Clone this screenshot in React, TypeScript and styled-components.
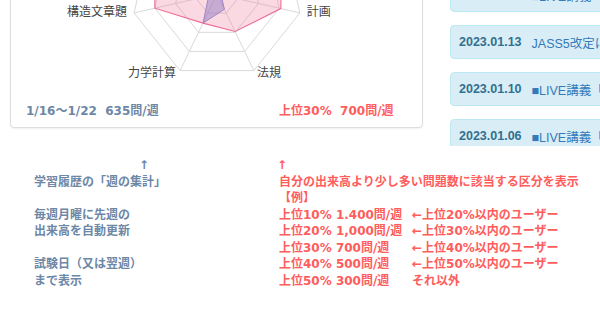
import React from 'react'
import styled, { createGlobalStyle } from 'styled-components'

const Colors = {
  Slate: '#6d87a6',
  Red: '#ff5c5c',
  Label: '#444',
  Grid: '#d9d9d9',
  InfoBg: '#d9edf7',
  InfoBorder: '#bce8f1',
  InfoText: '#31708f',
  Link: '#337ab7'
}

const JP = `'Noto Sans CJK JP', 'Noto Sans', sans-serif`
const WIDE = `'DejaVu Sans', 'Noto Sans CJK JP', sans-serif`

const GlobalStyle = createGlobalStyle`
  html, body {
    margin: 0;
    background: #fff;
    overflow: hidden;
  }
`

const AXES = ['', '', '計画', '法規', '力学計算', '構造文章題', '']
const MINE = [0.9, 0.98, 0.77, 0.49, 0.38, 0.75, 0.93]
const OTHERS = [0.55, 0.15, 0.05, 0.2, 0.38, 0.1, 0.25]

const NEWS = [
  { date: '2023.01.20', title: '■LIVE講義「構造力学 総まとめ」' },
  { date: '2023.01.17', title: '■LIVE講義「法規 直前対策」' },
  { date: '2023.01.13', title: 'JASS5改定に伴う問題の修正について' },
  { date: '2023.01.10', title: '■LIVE講義「施工 重要ポイント」' },
  { date: '2023.01.06', title: '■LIVE講義「計画 頻出テーマ」' }
]

const EXAMPLES = [
  ['上位10% 1.400問/週', '←上位20%以内のユーザー'],
  ['上位20% 1,000問/週', '←上位30%以内のユーザー'],
  ['上位30% 700問/週', '←上位40%以内のユーザー'],
  ['上位40% 500問/週', '←上位50%以内のユーザー'],
  ['上位50% 300問/週', 'それ以外']
]

const Page = styled.div`
  width: 600px;
  height: 328px;
  overflow: hidden;
`

// the page is scrolled: the top of the first row sits above the window
const TopRow = styled.div`
  display: flex;
  align-items: flex-start;
  margin-top: -110px;
`

const Card = styled.div`
  box-sizing: border-box;
  width: 413px;
  margin-left: 10px;
  background: #fff;
  border: 1px solid #dedede;
  border-radius: 4px;
  box-shadow: 0 1px 2px rgba(0, 0, 0, 0.06);
`

const ChartSvg = styled.svg`
  display: block;
`

const CardFooter = styled.div`
  display: flex;
  align-items: center;
  height: 36px;
  padding-left: 15px;
  font-family: ${WIDE};
  font-size: 12px;
  font-weight: 700;
`

const Stat = styled.span<{ tone: 'slate' | 'red'; w?: number }>`
  color: ${({ tone }) => (tone === 'red' ? Colors.Red : Colors.Slate)};
  width: ${({ w }) => (w ? `${w}px` : 'auto')};
  white-space: pre;
`

const NewsList = styled.div`
  display: flex;
  flex-direction: column;
  gap: 13px;
  height: 256px;
  overflow: hidden;
  margin-left: 27px;
  padding-top: 41px;
  box-sizing: border-box;
`

const NewsItem = styled.div`
  box-sizing: border-box;
  display: flex;
  align-items: center;
  gap: 10px;
  flex: none;
  width: 320px;
  height: 34px;
  padding: 0 8px;
  background: ${Colors.InfoBg};
  border: 1px solid ${Colors.InfoBorder};
  border-radius: 4px;
  font-family: 'Liberation Sans', ${JP};
  font-size: 12.5px;
  white-space: nowrap;
`

const NewsDate = styled.span`
  color: ${Colors.InfoText};
  font-weight: 700;
`

const NewsTitle = styled.span`
  color: ${Colors.Link};
`

const Notes = styled.div`
  display: grid;
  grid-template-columns: 245px 1fr;
  padding: 11px 0 0 34px;
  font-family: ${WIDE};
  font-size: 12px;
  font-weight: 700;
  line-height: 16.5px;
`

const NoteColumn = styled.div<{ tone: 'slate' | 'red' }>`
  color: ${({ tone }) => (tone === 'red' ? Colors.Red : Colors.Slate)};
  white-space: nowrap;
`

const Line = styled.div<{ indent?: number }>`
  height: 16.5px;
  margin-left: ${({ indent }) => indent || 0}px;
`

const ExampleGrid = styled.div`
  display: grid;
  grid-template-columns: 133px auto;
`

const R = 85
const CX = 206
const CY = 103

const point = (i: number, v: number) => {
  const a = (-90 + (i * 360) / 7) * (Math.PI / 180)
  return [CX + Math.cos(a) * R * v, CY + Math.sin(a) * R * v]
}

const polygon = (values: number[]) =>
  values.map((v, i) => point(i, v).map((n) => n.toFixed(1)).join(',')).join(' ')

const RadarChart = () => (
  <ChartSvg width={411} height={200} viewBox="0 0 411 200">
    {[0.25, 0.5, 0.75, 1].map((k) => (
      <polygon
        key={k}
        points={polygon(AXES.map(() => k))}
        fill="none"
        stroke={Colors.Grid}
        strokeWidth={1}
      />
    ))}
    {AXES.map((_, i) => {
      const [x, y] = point(i, 1)
      return <line key={i} x1={CX} y1={CY} x2={x} y2={y} stroke={Colors.Grid} />
    })}
    <polygon
      points={polygon(MINE)}
      fill="rgba(236, 120, 150, 0.28)"
      stroke="#ee6d98"
      strokeWidth={1.1}
    />
    <polygon
      points={polygon(OTHERS)}
      fill="rgba(140, 115, 190, 0.45)"
      stroke="#9d88c4"
      strokeWidth={1}
    />
    {AXES.map((label, i) => {
      if (!label) return null
      const [x, y] = point(i, 1)
      const right = x > CX
      return (
        <text
          key={label}
          x={right ? x + (i === 2 ? 7 : 3) : x - (i === 5 ? 7 : 4)}
          y={y + (i === 2 || i === 5 ? 3 : 6)}
          textAnchor={right ? 'start' : 'end'}
          fontFamily={JP}
          fontSize={12}
          fill={Colors.Label}
        >
          {label}
        </text>
      )
    })}
  </ChartSvg>
)

const App = () => (
  <Page>
    <GlobalStyle />
    <TopRow>
      <Card>
        <RadarChart />
        <CardFooter>
          <Stat tone="slate" w={253}>
            1/16〜1/22  635問/週
          </Stat>
          <Stat tone="red">上位30%  700問/週</Stat>
        </CardFooter>
      </Card>
      <NewsList>
        {NEWS.map((n) => (
          <NewsItem key={n.date}>
            <NewsDate>{n.date}</NewsDate>
            <NewsTitle>{n.title}</NewsTitle>
          </NewsItem>
        ))}
      </NewsList>
    </TopRow>
    <Notes>
      <NoteColumn tone="slate">
        <Line indent={105}>↑</Line>
        <Line>学習履歴の「週の集計」</Line>
        <Line />
        <Line>毎週月曜に先週の</Line>
        <Line>出来高を自動更新</Line>
        <Line />
        <Line>試験日（又は翌週）</Line>
        <Line>まで表示</Line>
      </NoteColumn>
      <NoteColumn tone="red">
        <Line indent={-2}>↑</Line>
        <Line>自分の出来高より少し多い問題数に該当する区分を表示</Line>
        <Line>【例】</Line>
        <ExampleGrid>
          {EXAMPLES.map(([a, b]) => (
            <React.Fragment key={a}>
              <Line>{a}</Line>
              <Line>{b}</Line>
            </React.Fragment>
          ))}
        </ExampleGrid>
      </NoteColumn>
    </Notes>
  </Page>
)

export default App
